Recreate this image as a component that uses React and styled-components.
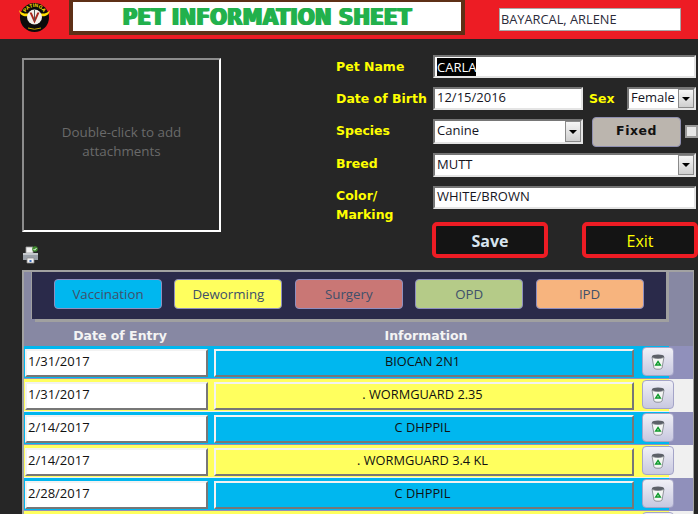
import React from 'react';
import styled, { createGlobalStyle } from 'styled-components';

const GlobalStyle = createGlobalStyle`
  html, body {
    margin: 0;
    padding: 0;
    background: #262626;
  }
  body {
    font-family: "Open Sans", "Liberation Sans", sans-serif;
  }
`;

const Page = styled.div`
  width: 698px;
  height: 514px;
  overflow: hidden;
  background: #262626;
`;

const Header = styled.header`
  height: 39px;
  background: #ed1c24;
  display: flex;
  align-items: flex-start;
`;

const LogoSlot = styled.div`
  width: 69px;
  padding: 2px 0 0 19px;
  box-sizing: border-box;
`;

const TitleBox = styled.div`
  width: 396px;
  height: 35px;
  box-sizing: border-box;
  background: #fff;
  border: 4px solid #5e3017;
  border-top-width: 2px;
  display: flex;
  align-items: center;
  justify-content: center;
`;

const Title = styled.h1`
  margin: 0;
  font-family: "DejaVu Sans", sans-serif;
  font-stretch: condensed;
  font-weight: 700;
  font-size: 22.4px;
  color: #22b14c;
  text-shadow: 1px 0 0 #22b14c, -1px 0 0 #22b14c;
  white-space: nowrap;
`;

const OwnerField = styled.div`
  width: 182px;
  height: 23px;
  margin: 8px 0 0 34px;
  box-sizing: border-box;
  background: #fff;
  border: 1px solid #a8a8a8;
  padding-left: 1px;
  font-size: 12.8px;
  line-height: 20px;
  color: #2b2b3a;
`;

const Upper = styled.section`
  height: 231px;
  display: flex;
`;

const LeftColumn = styled.div`
  width: 336px;
  flex-shrink: 0;
  padding: 19px 0 0 22px;
  box-sizing: border-box;
`;

const Attachment = styled.div`
  width: 199px;
  height: 174px;
  box-sizing: border-box;
  border: 2px solid;
  border-color: #8c8c8c #fff #fff #8c8c8c;
  display: flex;
  align-items: center;
  justify-content: center;
  text-align: center;
  font-size: 13.4px;
  line-height: 19px;
  color: #6a6a6a;
  padding: 0 30px 6px;
`;

const PrinterSlot = styled.div`
  margin-top: 14px;
  height: 19px;
`;

const Form = styled.div`
  padding-top: 16px;
  display: grid;
  grid-template-columns: 97px 150px 44px 69px;
  grid-template-rows: 23px 23px 25px 24px 23px 36px;
  row-gap: 9px;
  align-items: center;
`;

const Label = styled.label`
  font-family: "DejaVu Sans", sans-serif;
  font-weight: 700;
  font-size: 12.5px;
  line-height: 19px;
  color: #ffff00;
  padding-left: ${p => p.$indent || 0}px;
  padding-bottom: ${p => p.$lift || 0}px;
  white-space: nowrap;
`;

const MarkingLabel = styled(Label)`
  align-self: start;
`;

const Field = styled.div`
  grid-column: ${p => p.$col || 'auto'};
  height: ${p => p.$h || 23}px;
  box-sizing: border-box;
  background: #fff;
  border: 2px solid;
  border-color: #767676 #e4e4e4 #e4e4e4 #767676;
  display: flex;
  align-items: center;
  justify-content: space-between;
  padding-left: 2px;
  font-size: 13px;
  line-height: 17px;
  color: #15151f;
  white-space: nowrap;
  overflow: hidden;
`;

const FieldText = styled.span`
  margin-top: -2px;
`;

const Selected = styled.span`
  background: #000;
  color: #fff;
  line-height: 18px;
`;

const DropButton = styled.span`
  width: 16px;
  height: 100%;
  box-sizing: border-box;
  border: 1px solid #8a8a8a;
  background: linear-gradient(#f6f6f6, #cfcfcf);
  display: flex;
  align-items: center;
  justify-content: center;
  flex-shrink: 0;
  &::after {
    content: '';
    border-left: 4px solid transparent;
    border-right: 4px solid transparent;
    border-top: 4px solid #000;
  }
`;

const FixedCell = styled.div`
  grid-column: 3 / 5;
  display: flex;
  align-items: center;
  padding-left: 9px;
  gap: 4px;
`;

const FixedButton = styled.div`
  width: 89px;
  height: 30px;
  flex-shrink: 0;
  box-sizing: border-box;
  background: #bbb5ae;
  border: 1px solid #8f8fb0;
  border-radius: 4px;
  display: flex;
  align-items: center;
  justify-content: center;
  padding-bottom: 2px;
  font-family: "DejaVu Sans", sans-serif;
  font-weight: 700;
  font-size: 12.5px;
  letter-spacing: 0.5px;
  color: #111;
`;

const CheckBox = styled.span`
  width: 13px;
  height: 13px;
  flex-shrink: 0;
  box-sizing: border-box;
  background: #e6e6e6;
  border: 2px solid #9a9a9a;
`;

const ActionCell = styled.div`
  grid-column: 2 / 5;
  display: flex;
  justify-content: space-between;
  margin: 8px 0 0 -1px;
  width: 266px;
  height: 36px;
`;

const ActionButton = styled.div`
  width: 116px;
  height: 36px;
  box-sizing: border-box;
  background: #141414;
  border: 4px solid #ed1c24;
  border-radius: 5px;
  display: flex;
  align-items: center;
  justify-content: center;
  padding-top: 2px;
  font-size: 16px;
  font-weight: ${p => (p.$bold ? 700 : 400)};
  color: ${p => p.$color};
`;

const Panel = styled.section`
  width: 672px;
  height: 244px;
  margin-left: 22px;
  box-sizing: border-box;
  background: #8788a3;
  border: solid #a2a2a2;
  border-width: 2px 1px 0 2px;
  overflow: hidden;
`;

const TabBarWrap = styled.div`
  margin-left: 7px;
  width: 638px;
  height: 50px;
  box-sizing: border-box;
  background: #a0a0a0;
  padding-right: 3px;
  padding-bottom: 3px;
  clip-path: polygon(0 0, 100% 0, 100% 100%, 4px 100%, 4px 47px, 0 47px);
`;

const TabBar = styled.nav`
  height: 47px;
  box-sizing: border-box;
  background: #2a2a4a;
  border-left: 1px solid #a0a0a0;
  padding: 7px 0 0 22px;
  display: flex;
  gap: 12.4px;
`;

const Tab = styled.div`
  width: 108px;
  height: 30px;
  box-sizing: border-box;
  background: ${p => p.$bg};
  border: 1px solid #8f8fc0;
  border-radius: 4px;
  display: flex;
  align-items: center;
  justify-content: center;
  font-size: 13.3px;
  color: #40506a;
`;

const TableHead = styled.div`
  height: 24px;
  padding-top: 2px;
  box-sizing: border-box;
  display: grid;
  grid-template-columns: 192px 420px;
  align-items: center;
  text-align: center;
  font-family: "DejaVu Sans", sans-serif;
  font-weight: 700;
  font-size: 12.5px;
  color: #f4f4f4;
`;

const Row = styled.div`
  height: 33px;
  background: ${p => (p.$odd ? '#9090bb' : '#f0f0f0')};
`;

const Strip = styled.div`
  width: 645px;
  height: 32px;
  box-sizing: border-box;
  background: ${p => p.$bg};
  display: flex;
  align-items: flex-start;
  padding: 3px 0 0 1px;
`;

const DateCell = styled.div`
  width: 183px;
  height: 28px;
  flex-shrink: 0;
  box-sizing: border-box;
  background: #fff;
  border: 2px solid;
  border-color: #f2f2f2 #777 #777 #f2f2f2;
  display: flex;
  align-items: center;
  padding: 0 0 5px 1px;
  font-size: 13px;
  color: #111;
`;

const InfoCell = styled.div`
  width: 420px;
  height: 28px;
  flex-shrink: 0;
  margin-left: 6px;
  box-sizing: border-box;
  background: ${p => p.$bg};
  border: 2px solid;
  border-color: #f2f2f2 #777 #777 #f2f2f2;
  display: flex;
  align-items: center;
  justify-content: center;
  padding: 0 3px 5px 0;
  font-size: 12.8px;
  color: #111;
`;

const DeleteButton = styled.div`
  width: 32px;
  height: 29px;
  margin: -2px 0 0 8px;
  flex-shrink: 0;
  box-sizing: border-box;
  background: linear-gradient(#f0f0f6, #c8c8e0);
  border: 1px solid #a4a4c8;
  border-radius: 4px;
  display: flex;
  align-items: center;
  justify-content: center;
`;

const Logo = () => (
  <svg width="31" height="31" viewBox="0 0 31 31">
    <circle cx="15.5" cy="15.5" r="14.5" fill="#0b0b0b" />
    <path d="M0 8 C1 14 6 15 9 14 L9 11.5 C6 12 2 11 0 8 Z M31 8 C30 14 25 15 22 14 L22 11.5 C25 12 29 11 31 8 Z" fill="#ffe000" />
    <circle cx="15.5" cy="15" r="7.5" fill="#f4f0ea" />
    <path d="M10.5 10.5 L15.5 21.5 L20.5 10.5 L18.3 10.5 L15.5 17 L12.7 10.5 Z" fill="#a8281e" />
    <path d="M15 8 H16 V19 H15 Z" fill="#555" />
    <path id="logo-arc" d="M5.5 15 A10 10 0 0 1 25.5 15" fill="none" />
    <text fontFamily="Liberation Sans" fontWeight="700" fontSize="5" fill="#ffe000" textAnchor="middle">
      <textPath href="#logo-arc" startOffset="50%">PATINGA</textPath>
    </text>
    <path d="M9 26 Q15.5 28.5 22 26" stroke="#c8a800" strokeWidth="1" fill="none" />
  </svg>
);

const PrinterIcon = () => (
  <svg width="17" height="18" viewBox="0 0 17 18">
    <path d="M4 1 H11 V7 H4 Z" fill="#f2f2f2" stroke="#9a9a9a" strokeWidth="0.8" />
    <path d="M1 7 H16 V14 H1 Z" fill="#9aa0a8" />
    <path d="M1 7 H16 V9 H1 Z" fill="#c4c8cc" />
    <path d="M5 12 H12 V17 H5 Z" fill="#f4f4f4" stroke="#8a8a8a" strokeWidth="0.8" />
    <rect x="7.5" y="14" width="2" height="2" fill="#3a6fc0" />
    <circle cx="13" cy="3" r="2.8" fill="#3f8a2e" />
    <path d="M11.6 3 L12.7 4.2 L14.5 2" stroke="#fff" strokeWidth="0.9" fill="none" />
  </svg>
);

const TrashIcon = () => (
  <svg width="14" height="16" viewBox="0 0 14 16">
    <ellipse cx="7" cy="2.4" rx="6.2" ry="2" fill="#5c6068" />
    <path d="M1 3 L3 14 C3.4 15.6 10.6 15.6 11 14 L13 3 C11 5 3 5 1 3 Z" fill="#f4f6f4" stroke="#6a6e74" strokeWidth="0.7" />
    <path d="M7 7.5 L9.3 11 H4.7 Z" fill="#e8f4e8" stroke="#0f9a2c" strokeWidth="1.4" />
  </svg>
);

const tabs = [
  { name: 'Vaccination', bg: '#00b7ef' },
  { name: 'Deworming', bg: '#ffff5e' },
  { name: 'Surgery', bg: '#c97775' },
  { name: 'OPD', bg: '#b5cb88' },
  { name: 'IPD', bg: '#f7b47e' },
];

const records = [
  { date: '1/31/2017', info: 'BIOCAN 2N1', bg: '#00b7ef' },
  { date: '1/31/2017', info: '. WORMGUARD 2.35', bg: '#ffff5e' },
  { date: '2/14/2017', info: 'C DHPPIL', bg: '#00b7ef' },
  { date: '2/14/2017', info: '. WORMGUARD 3.4 KL', bg: '#ffff5e' },
  { date: '2/28/2017', info: 'C DHPPIL', bg: '#00b7ef' },
  { date: '', info: '', bg: '#ffff5e' },
];

const App = () => (
  <Page>
    <GlobalStyle />
    <Header>
      <LogoSlot><Logo /></LogoSlot>
      <TitleBox><Title>PET INFORMATION SHEET</Title></TitleBox>
      <OwnerField>BAYARCAL, ARLENE</OwnerField>
    </Header>

    <Upper>
      <LeftColumn>
        <Attachment>Double-click to add attachments</Attachment>
        <PrinterSlot><PrinterIcon /></PrinterSlot>
      </LeftColumn>
      <Form>
        <Label>Pet Name</Label>
        <Field $col="2 / 5"><Selected>CARLA</Selected></Field>

        <Label>Date of Birth</Label>
        <Field><FieldText>12/15/2016</FieldText></Field>
        <Label $indent={6}>Sex</Label>
        <Field><FieldText>Female</FieldText><DropButton /></Field>

        <Label $lift={3}>Species</Label>
        <Field $h={25}><FieldText>Canine</FieldText><DropButton /></Field>
        <FixedCell>
          <FixedButton>Fixed</FixedButton>
          <CheckBox />
        </FixedCell>

        <Label $lift={3}>Breed</Label>
        <Field $col="2 / 5" $h={24}><FieldText>MUTT</FieldText><DropButton /></Field>

        <MarkingLabel>Color/<br />Marking</MarkingLabel>
        <Field $col="2 / 5"><FieldText>WHITE/BROWN</FieldText></Field>

        <span />
        <ActionCell>
          <ActionButton $color="#d8e4ee" $bold>Save</ActionButton>
          <ActionButton $color="#ffff00">Exit</ActionButton>
        </ActionCell>
      </Form>
    </Upper>

    <Panel>
      <TabBarWrap>
        <TabBar>
          {tabs.map(t => <Tab key={t.name} $bg={t.bg}>{t.name}</Tab>)}
        </TabBar>
      </TabBarWrap>
      <TableHead>
        <span>Date of Entry</span>
        <span>Information</span>
      </TableHead>
      {records.map((r, i) => (
        <Row key={i} $odd={i % 2 === 0}>
          <Strip $bg={r.bg}>
            <DateCell>{r.date}</DateCell>
            <InfoCell $bg={r.bg}>{r.info}</InfoCell>
            <DeleteButton><TrashIcon /></DeleteButton>
          </Strip>
        </Row>
      ))}
    </Panel>
  </Page>
);

export default App;
